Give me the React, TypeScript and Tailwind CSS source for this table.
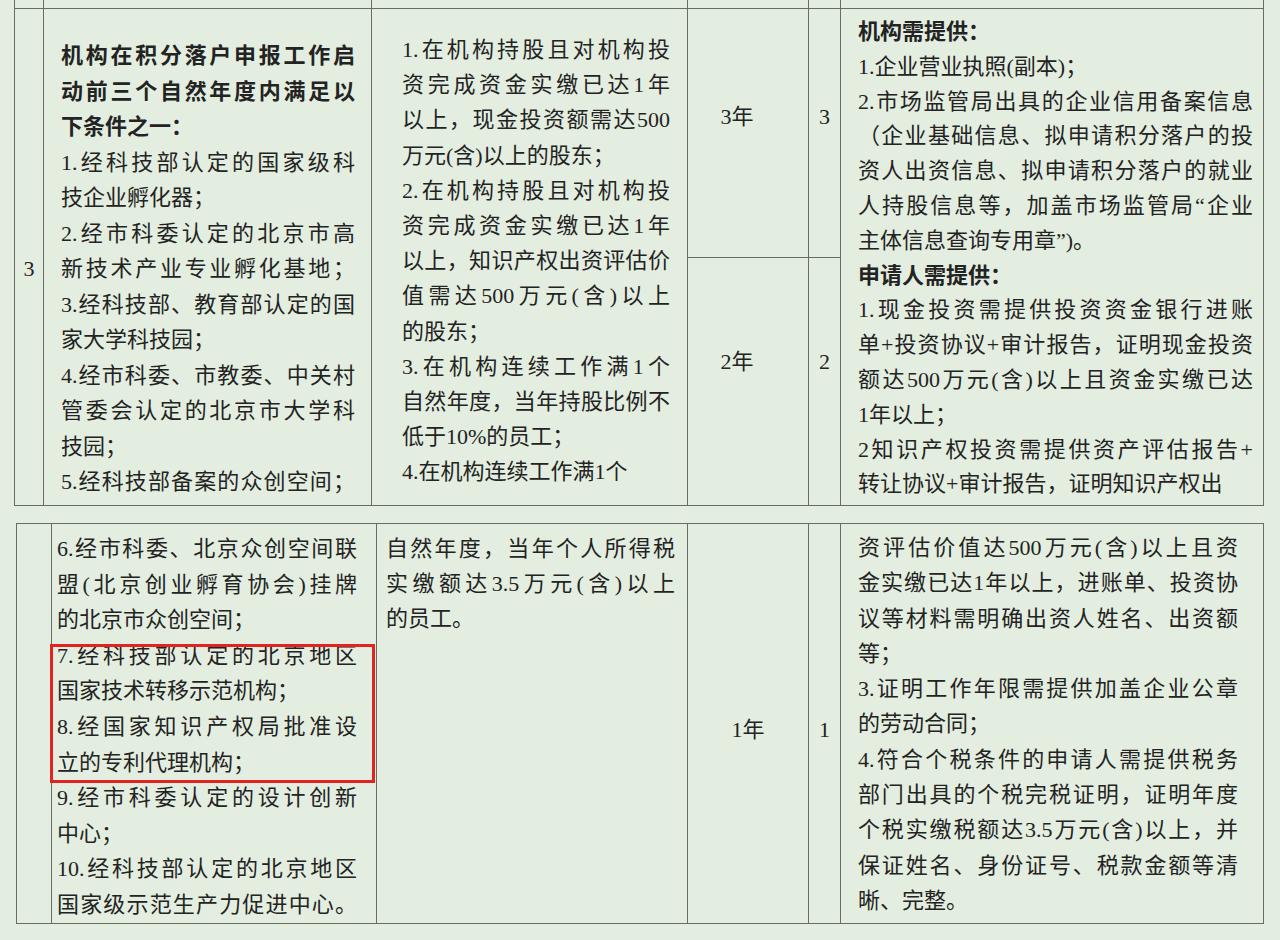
import clsx from "clsx";

type Line = { t: string; j?: boolean; b?: boolean };

function Lines({ lines, lh }: { lines: Line[]; lh: string }) {
  return (
    <div>
      {lines.map((l, i) => (
        <div
          key={i}
          className={clsx(
            lh,
            l.j && "text-justify [text-align-last:justify]",
            l.b && "font-bold"
          )}
        >
          {l.t}
        </div>
      ))}
    </div>
  );
}

const topConditions: Line[] = [
  { t: "机构在积分落户申报工作启", j: true, b: true },
  { t: "动前三个自然年度内满足以", j: true, b: true },
  { t: "下条件之一：", b: true },
  { t: "1.经科技部认定的国家级科", j: true },
  { t: "技企业孵化器；" },
  { t: "2.经市科委认定的北京市高", j: true },
  { t: "新技术产业专业孵化基地；", j: true },
  { t: "3.经科技部、教育部认定的国", j: true },
  { t: "家大学科技园；" },
  { t: "4.经市科委、市教委、中关村", j: true },
  { t: "管委会认定的北京市大学科", j: true },
  { t: "技园；" },
  { t: "5.经科技部备案的众创空间；", j: true },
];

const topStaff: Line[] = [
  { t: "1.在机构持股且对机构投", j: true },
  { t: "资完成资金实缴已达1年", j: true },
  { t: "以上，现金投资额需达500", j: true },
  { t: "万元(含)以上的股东；" },
  { t: "2.在机构持股且对机构投", j: true },
  { t: "资完成资金实缴已达1年", j: true },
  { t: "以上，知识产权出资评估价", j: true },
  { t: "值需达500万元(含)以上", j: true },
  { t: "的股东；" },
  { t: "3.在机构连续工作满1个", j: true },
  { t: "自然年度，当年持股比例不", j: true },
  { t: "低于10%的员工；" },
  { t: "4.在机构连续工作满1个" },
];

const topDocs: Line[] = [
  { t: "机构需提供：", b: true },
  { t: "1.企业营业执照(副本)；" },
  { t: "2.市场监管局出具的企业信用备案信息", j: true },
  { t: "（企业基础信息、拟申请积分落户的投", j: true },
  { t: "资人出资信息、拟申请积分落户的就业", j: true },
  { t: "人持股信息等，加盖市场监管局“企业", j: true },
  { t: "主体信息查询专用章”)。" },
  { t: "申请人需提供：", b: true },
  { t: "1.现金投资需提供投资资金银行进账", j: true },
  { t: "单+投资协议+审计报告，证明现金投资", j: true },
  { t: "额达500万元(含)以上且资金实缴已达", j: true },
  { t: "1年以上；" },
  { t: "2知识产权投资需提供资产评估报告+", j: true },
  { t: "转让协议+审计报告，证明知识产权出" },
];

const bottomConditions: Line[] = [
  { t: "6.经市科委、北京众创空间联", j: true },
  { t: "盟(北京创业孵育协会)挂牌", j: true },
  { t: "的北京市众创空间；" },
  { t: "7.经科技部认定的北京地区", j: true },
  { t: "国家技术转移示范机构；" },
  { t: "8.经国家知识产权局批准设", j: true },
  { t: "立的专利代理机构；" },
  { t: "9.经市科委认定的设计创新", j: true },
  { t: "中心；" },
  { t: "10.经科技部认定的北京地区", j: true },
  { t: "国家级示范生产力促进中心。", j: true },
];

const bottomStaff: Line[] = [
  { t: "自然年度，当年个人所得税", j: true },
  { t: "实缴额达3.5万元(含)以上", j: true },
  { t: "的员工。" },
];

const bottomDocs: Line[] = [
  { t: "资评估价值达500万元(含)以上且资", j: true },
  { t: "金实缴已达1年以上，进账单、投资协", j: true },
  { t: "议等材料需明确出资人姓名、出资额", j: true },
  { t: "等；" },
  { t: "3.证明工作年限需提供加盖企业公章", j: true },
  { t: "的劳动合同；" },
  { t: "4.符合个税条件的申请人需提供税务", j: true },
  { t: "部门出具的个税完税证明，证明年度", j: true },
  { t: "个税实缴税额达3.5万元(含)以上，并", j: true },
  { t: "保证姓名、身份证号、税款金额等清", j: true },
  { t: "晰、完整。" },
];

const cell = "border-r border-b border-[#666d65]";

export default function App() {
  return (
    <div className="h-[940px] w-[1280px] overflow-hidden bg-[#e3eee0] font-['Liberation_Serif','Noto_Sans_CJK_SC',serif] text-[22px] text-[#232323]">
      {/* upper part of the table */}
      <div className="ml-[14px] w-[1250px] border-l border-[#666d65]">
        <div className="grid h-[9px] grid-cols-[29px_328px_316px_121px_32px_423px]">
          <div className={cell} />
          <div className={cell} />
          <div className={cell} />
          <div className={cell} />
          <div className={cell} />
          <div className={cell} />
        </div>
        <div className="grid grid-cols-[29px_328px_316px_121px_32px_423px] grid-rows-[249px_248px]">
          <div className={clsx(cell, "row-span-2 pt-[242px] text-center leading-[35px]")}>3</div>
          <div className={clsx(cell, "row-span-2 pl-[17px] pr-[16px] pt-[29px]")}>
            <Lines lines={topConditions} lh="h-[35.5px] leading-[35.5px]" />
          </div>
          <div className={clsx(cell, "row-span-2 pl-[30px] pr-[17px] pt-[23px]")}>
            <Lines lines={topStaff} lh="h-[35.2px] leading-[35.2px]" />
          </div>
          <div className={clsx(cell, "pr-[22px] pt-[90px] text-center leading-[35px]")}>3年</div>
          <div className={clsx(cell, "pt-[90px] text-center leading-[35px]")}>3</div>
          <div className={clsx(cell, "row-span-2 pl-[17px] pr-[10px] pt-[6px]")}>
            <Lines lines={topDocs} lh="h-[34.8px] leading-[34.8px]" />
          </div>
          <div className={clsx(cell, "pr-[22px] pt-[86px] text-center leading-[35px]")}>2年</div>
          <div className={clsx(cell, "pt-[86px] text-center leading-[35px]")}>2</div>
        </div>
      </div>

      {/* lower part of the table */}
      <div className="relative ml-[16px] mt-[17px] w-[1248px] border-l border-t border-[#666d65]">
        <div className="grid h-[400px] grid-cols-[35px_325px_311px_121px_32px_423px]">
          <div className={cell} />
          <div className={clsx(cell, "pl-[5px] pr-[19px] pt-[7px]")}>
            <Lines lines={bottomConditions} lh="h-[35.6px] leading-[35.6px]" />
          </div>
          <div className={clsx(cell, "pl-[9px] pr-[12px] pt-[7px]")}>
            <Lines lines={bottomStaff} lh="h-[35px] leading-[35px]" />
          </div>
          <div className={clsx(cell, "pt-[188px] text-center leading-[35px]")}>1年</div>
          <div className={clsx(cell, "pt-[188px] text-center leading-[35px]")}>1</div>
          <div className={clsx(cell, "pl-[17px] pr-[25px] pt-[6px]")}>
            <Lines lines={bottomDocs} lh="h-[35.3px] leading-[35.3px]" />
          </div>
        </div>
        <div className="absolute left-[33px] top-[120px] h-[139px] w-[325px] border-[3px] border-[#e2231f]" />
      </div>
    </div>
  );
}
